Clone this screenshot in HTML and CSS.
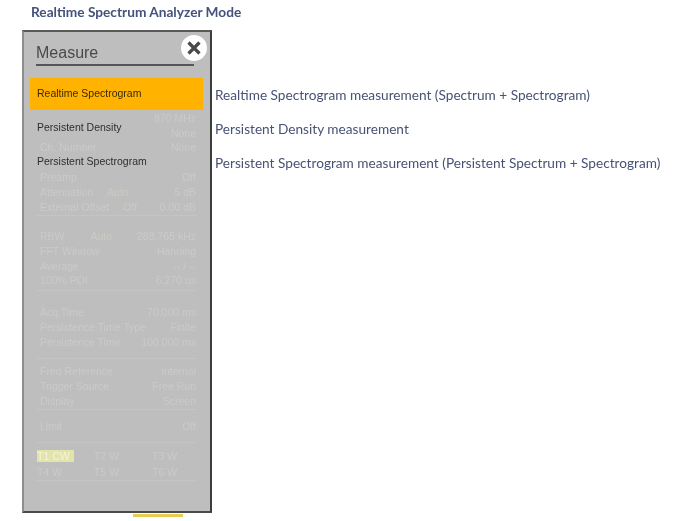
FILE: index.html
```html
<!DOCTYPE html>
<html lang="en">
<head>
<meta charset="utf-8">
<title>Realtime Spectrum Analyzer Mode</title>
<link rel="stylesheet" href="styles.css">
</head>
<body>
<h1 class="title">Realtime Spectrum Analyzer Mode</h1>
<main class="content">
  <section class="panel">
    <header class="panel-head">
      <h2 class="panel-title">Measure</h2>
      <span class="close">
        <svg viewBox="0 0 16 16" width="16" height="16"><path d="M2.5 2.5 13.5 13.5M13.5 2.5 2.5 13.5" fill="none" stroke="#4a4a4a" stroke-width="3.2"/></svg>
      </span>
    </header>
    <div class="faint">
      <div class="group first">
        <div class="row end"><span>870 MHz</span></div>
        <div class="row end"><span>None</span></div>
        <div class="row"><span>Ch. Number</span><span>None</span></div>
      </div>
      <div class="group g1">
        <div class="row"><span>Preamp</span><span>Off</span></div>
        <div class="row"><span>Attenuation <i class="auto">Auto</i></span><span>5 dB</span></div>
        <div class="row"><span>External Offset <i class="auto">Off</i></span><span>0.00 dB</span></div>
      </div>
      <div class="group g2">
        <div class="row"><span>RBW <i class="auto wide">Auto</i></span><span>288.765 kHz</span></div>
        <div class="row"><span>FFT Window</span><span>Hanning</span></div>
        <div class="row tight"><span>Average</span><span>-- / --</span></div>
        <div class="row tight"><span>100% POI</span><span>6.270 us</span></div>
      </div>
      <div class="group g3">
        <div class="row"><span>Acq Time</span><span>70.000 ms</span></div>
        <div class="row"><span>Persistence Time Type</span><span>Finite</span></div>
        <div class="row"><span>Persistence Time</span><span>100.000 ms</span></div>
      </div>
      <div class="group g4">
        <div class="row"><span>Freq Reference</span><span>Internal</span></div>
        <div class="row"><span>Trigger Source</span><span>Free Run</span></div>
        <div class="row"><span>Display</span><span>Screen</span></div>
      </div>
      <div class="group g5">
        <div class="row"><span>Limit</span><span>Off</span></div>
      </div>
      <div class="traces">
        <span class="chip">T1 CW</span><span>T2 W</span><span>T3 W</span>
        <span>T4 W</span><span>T5 W</span><span>T6 W</span>
      </div>
    </div>
    <nav class="menu">
      <div class="item active">Realtime Spectrogram</div>
      <div class="item">Persistent Density</div>
      <div class="item">Persistent Spectrogram</div>
    </nav>
  </section>
  <ul class="notes">
    <li>Realtime Spectrogram measurement (Spectrum + Spectrogram)</li>
    <li>Persistent Density measurement</li>
    <li>Persistent Spectrogram measurement (Persistent Spectrum + Spectrogram)</li>
  </ul>
</main>
<div class="tab"></div>
</body>
</html>
```
FILE: styles.css
```css
* { box-sizing: border-box; }
html, body { margin: 0; height: 521px; overflow: hidden; background: #fff; }
body { font-family: Lato, "Open Sans", sans-serif; position: relative; }
.title {
  margin: 0; padding: 3px 0 0 31px; height: 30px;
  font-size: 13.7px; line-height: 17px; font-weight: 700; color: #44527c;
  filter: blur(0.3px);
}
.content { display: flex; align-items: flex-start; padding-left: 22px; }
.panel {
  position: relative; width: 190px; height: 483px; background: #bebebe;
  border-left: 2px solid #8e8e8e; border-right: 2px solid #3c3c3c;
  border-top: 2px solid #5a5a5a; border-bottom: 2px solid #4a4a4a;
  font-family: "Liberation Sans", Arial, sans-serif; padding: 0 12px 0 12px;
}
.panel-head { position: relative; height: 34px; border-bottom: 2px solid #555; margin-right: 4px; }
.panel-title { margin: 0; padding-top: 12px; font-size: 16px; line-height: 18px; font-weight: 400; color: #4a4a4a; filter: blur(0.3px); }
.close {
  position: absolute; right: -13px; top: 3px; width: 26px; height: 26px; border-radius: 50%;
  background: #fff; display: flex; align-items: center; justify-content: center;
}
.faint { color: #cacaca; font-size: 10.5px; filter: blur(0.7px); margin-right: 1px; padding-top: 45px; }
.row { display: flex; justify-content: space-between; height: 15px; line-height: 15px; padding: 0 1px 0 4px; }
.row.end { justify-content: flex-end; }
.row.tight { height: 14px; }
.group { border-bottom: 1px solid #c4c4c4; }
.group.first { height: 58px; border-bottom: 0; }
.group.first .row { height: 14.5px; }
.g1 { padding-top: 1px; }
.g2 { padding-top: 13px; padding-bottom: 3px; }
.g3 { padding-top: 14px; padding-bottom: 8px; }
.g4 { padding-top: 5px; }
.g5 { padding-top: 9px; padding-bottom: 8px; }
.auto { font-style: normal; color: #cbcbc0; margin-left: 11px; }
.auto.wide { margin-left: 23px; }
.traces {
  display: grid; grid-template-columns: 57px 58px 1fr; row-gap: 4px; margin-top: 7px;
  line-height: 12px; padding-bottom: 2px; border-bottom: 1px solid #c4c4c4; padding-left: 1px;
}
.chip { background: #e3e3ac; color: #f4f4dc; width: 37px; }
.menu { position: absolute; left: 6px; top: 46px; width: 173px; }
.item { height: 34px; line-height: 34px; padding-left: 7px; font-size: 10.5px; color: #2e2e2e; filter: blur(0.25px); }
.item.active { height: 32px; line-height: 30px; background: #ffb200; color: #3a2a00; }
.notes {
  list-style: none; margin: 0; padding: 48px 0 0 3px;
  font-size: 13.65px; line-height: 34px; color: #475274; white-space: nowrap;
  filter: blur(0.3px);
}
.tab { position: absolute; left: 133px; top: 514px; width: 50px; height: 3px; background: #e8cd55; }
```
